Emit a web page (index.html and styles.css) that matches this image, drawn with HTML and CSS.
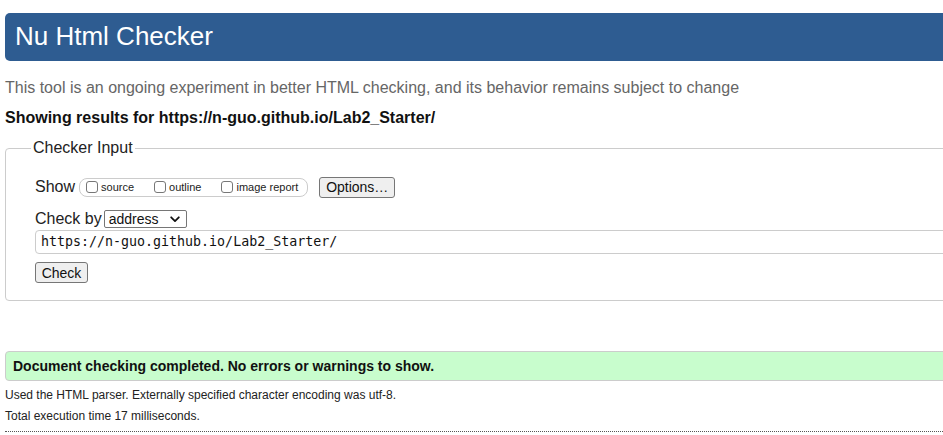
FILE: index.html
```html
<!DOCTYPE html>
<html lang="en">
<head>
<meta charset="utf-8">
<title>Nu Html Checker</title>
<link rel="stylesheet" href="styles.css">
</head>
<body>
<div class="page">
  <h1 class="title">Nu Html Checker</h1>
  <p class="intro">This tool is an ongoing experiment in better HTML checking, and its behavior remains subject to change</p>
  <p class="showing">Showing results for https://n-guo.github.io/Lab2_Starter/</p>
  <fieldset class="checker">
    <legend class="legend">Checker Input</legend>
    <div class="row show-row">
      <span class="label">Show</span>
      <span class="opts">
        <label class="opt opt-gap"><span class="box"></span>source</label>
        <label class="opt opt-gap"><span class="box"></span>outline</label>
        <label class="opt"><span class="box"></span>image report</label>
      </span>
      <span class="btn btn-options">Options…</span>
    </div>
    <div class="row by-row">
      <span class="label">Check by</span>
      <span class="select">address<svg class="chev" width="10" height="7" viewBox="0 0 10 7"><path d="M1.2 1.3 L5 5.1 L8.8 1.3" fill="none" stroke="#111" stroke-width="1.8" stroke-linecap="round" stroke-linejoin="round"/></svg></span>
    </div>
    <div class="url">https://n-guo.github.io/Lab2_Starter/</div>
    <span class="btn btn-check">Check</span>
  </fieldset>
  <div class="success">Document checking completed. No errors or warnings to show.</div>
  <p class="details">Used the HTML parser. Externally specified character encoding was utf-8.</p>
  <p class="details">Total execution time 17 milliseconds.</p>
  <div class="rule"></div>
</div>
</body>
</html>
```
FILE: styles.css
```css
html, body {
  margin: 0;
  padding: 0;
  overflow: hidden;
  background: #fff;
}
body {
  font-family: "Liberation Sans", Arial, sans-serif;
  color: #000;
}
.page {
  width: 1120px;
  padding: 13px 0 0 5px;
}
.title {
  margin: 0;
  height: 48px;
  line-height: 47px;
  background: #2e5c91;
  color: #fff;
  font-size: 26px;
  font-weight: normal;
  padding-left: 10px;
  border-radius: 5px;
}
.intro {
  margin: 18px 0 0;
  font-size: 16px;
  line-height: 18px;
  color: #666;
}
.showing {
  margin: 12px 0 0;
  font-size: 16px;
  line-height: 18px;
  font-weight: bold;
  color: #111;
}
.checker {
  margin: 12px 0 0;
  border: 1px solid #ccc;
  border-radius: 4px;
  padding: 16px 0 17px 29px;
  min-width: 0;
}
.legend {
  font-size: 16px;
  line-height: 18px;
  padding: 0 2px;
  margin-left: -4px;
  color: #222;
}
.row {
  display: flex;
  align-items: center;
}
.label {
  font-size: 16px;
  line-height: 18px;
  color: #222;
}
.show-row {
  height: 22px;
  margin-top: 3px;
}
.opts {
  display: inline-flex;
  align-items: center;
  height: 17px;
  border: 1px solid #ccc;
  border-radius: 8px;
  padding: 0 9px 0 6px;
  margin-left: 4px;
  font-size: 11px;
  color: #222;
}
.opt {
  display: inline-flex;
  align-items: center;
}
.opt-gap { margin-right: 20px; }
.box {
  width: 12px;
  height: 12px;
  box-sizing: border-box;
  border: 1px solid #777;
  border-radius: 3px;
  margin-right: 3px;
  background: #fff;
}
.btn {
  display: inline-flex;
  align-items: center;
  justify-content: center;
  box-sizing: border-box;
  height: 21px;
  font-size: 14px;
  background: #efefef;
  border: 1px solid #767676;
  border-radius: 3px;
  color: #111;
}
.btn-options {
  width: 76px;
  margin-left: 11px;
}
.by-row {
  margin-top: 12px;
  height: 18px;
}
.select {
  display: inline-flex;
  align-items: center;
  justify-content: space-between;
  box-sizing: border-box;
  width: 83px;
  height: 18px;
  margin-left: 2px;
  padding: 0 6px 0 4px;
  border: 1px solid #767676;
  border-radius: 2px;
  font-size: 14px;
  color: #111;
}
.url {
  margin-top: 2px;
  height: 24px;
  box-sizing: border-box;
  border: 1px solid #ccc;
  border-radius: 4px;
  padding-left: 5px;
  line-height: 22px;
  font-family: "DejaVu Sans Mono", "Liberation Mono", monospace;
  font-size: 13.3px;
  color: #111;
}
.btn-check {
  width: 53px;
  margin-top: 8px;
}
.success {
  margin-top: 50px;
  height: 30px;
  box-sizing: border-box;
  border: 1px solid #ccc;
  border-radius: 4px;
  background: #c8fdcd;
  padding-left: 7px;
  line-height: 28px;
  font-size: 14px;
  font-weight: bold;
  color: #111;
}
.details {
  margin: 7px 0 0;
  font-size: 12px;
  line-height: 14px;
  color: #222;
}
.rule {
  margin-top: 8px;
  border-top: 1px dotted #555;
}
```
